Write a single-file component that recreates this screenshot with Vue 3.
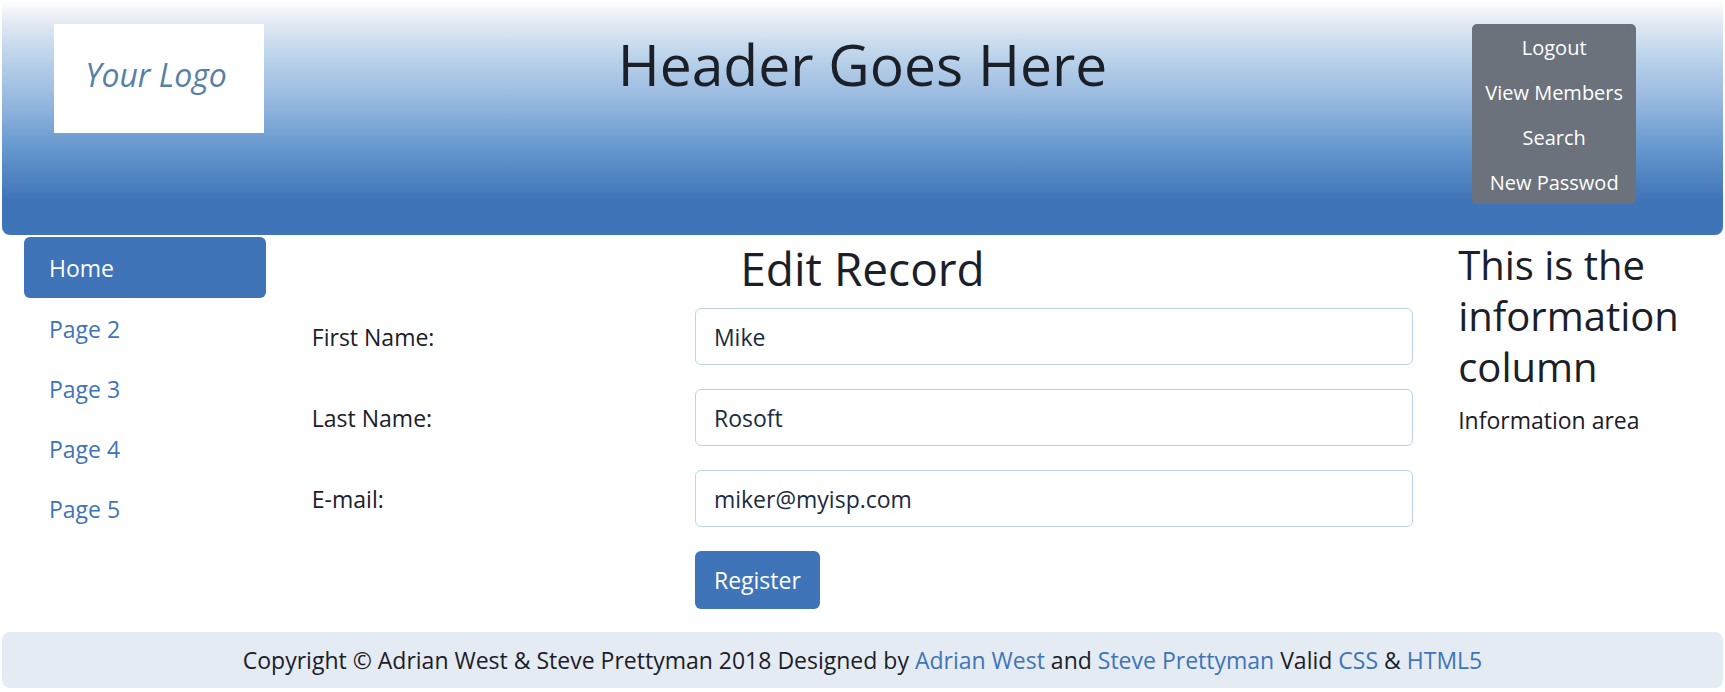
<script setup>
import { ref } from 'vue'

const actions = ['Logout', 'View Members', 'Search', 'New Passwod']
const pages = ['Home', 'Page 2', 'Page 3', 'Page 4', 'Page 5']
const fields = ref([
  { id: 'first_name', label: 'First Name:', type: 'text', value: 'Mike' },
  { id: 'last_name', label: 'Last Name:', type: 'text', value: 'Rosoft' },
  { id: 'email', label: 'E-mail:', type: 'email', value: 'miker@myisp.com' }
])
</script>

<template>
  <div class="page">
    <header class="banner">
      <div class="logo-cell"><div class="logo">Your Logo</div></div>
      <h1>Header Goes Here</h1>
      <nav class="actions" aria-label="Account">
        <button v-for="action in actions" :key="action" type="button">{{ action }}</button>
      </nav>
    </header>

    <div class="columns">
      <nav class="pages" aria-label="Pages">
        <a v-for="(page, i) in pages" :key="page" href="#" :class="{ active: i === 0 }">{{ page }}</a>
      </nav>

      <main>
        <h2>Edit Record</h2>
        <form @submit.prevent>
          <div v-for="field in fields" :key="field.id" class="row">
            <label :for="field.id">{{ field.label }}</label>
            <input :id="field.id" v-model="field.value" :type="field.type" />
          </div>
          <div class="row submit">
            <button type="submit">Register</button>
          </div>
        </form>
      </main>

      <aside>
        <h3>This is the information column</h3>
        <p>Information area</p>
      </aside>
    </div>

    <footer>
      Copyright © Adrian West &amp; Steve Prettyman 2018 Designed by
      <a href="#">Adrian West</a> and <a href="#">Steve Prettyman</a> Valid
      <a href="#">CSS</a> &amp; <a href="#">HTML5</a>
    </footer>
  </div>
</template>

<style>
body {
  background: #fff;
}
</style>

<style scoped>
* {
  box-sizing: border-box;
}
.page {
  padding: 0 2px;
  font-family: "Segoe UI", "Open Sans", "Noto Sans", sans-serif;
  font-size: 23px;
  line-height: 36px;
  color: #1b2028;
}
h1, h2, h3, p {
  margin: 0;
  font-weight: 400;
}
a {
  color: #4074b8;
  text-decoration: none;
}
button, input {
  font: inherit;
}
.banner {
  display: grid;
  grid-template-columns: 2fr 8fr 2fr;
  align-items: start;
  padding: 24px 0 31px;
  border-radius: 0 0 8px 8px;
  background: linear-gradient(#fff 0, #e5ebf3 20px, #c0d6ec 52px, #95b7df 102px, #6698ce 148px, #4074b8 200px);
}
.logo-cell {
  padding: 0 22px 0 52px;
}
.logo {
  max-width: 210px;
  height: 109px;
  padding-right: 6px;
  background: #fff;
  color: #587fa8;
  font-size: 32px;
  font-style: italic;
  line-height: 102px;
  text-align: center;
}
h1 {
  font-size: 57px;
  line-height: 80px;
  text-align: center;
}
.actions {
  display: flex;
  flex-direction: column;
  justify-self: start;
  width: 164px;
  margin-left: 36px;
  border-radius: 5px;
  background: #6b727c;
}
.actions button {
  height: 45px;
  padding: 2px 0 0;
  border: 0;
  background: none;
  color: #fff;
  font-size: 20px;
  line-height: 40px;
  white-space: nowrap;
}
.columns {
  display: grid;
  grid-template-columns: 2fr 8fr 2fr;
  padding-top: 2px;
}
.pages {
  display: flex;
  flex-direction: column;
  padding: 0 23px 0 22px;
}
.pages a {
  padding: 13px 25px 11px;
}
.pages a.active {
  border-radius: 6px;
  background: #4074b8;
  color: #fff;
  line-height: 37px;
}
main {
  padding: 0 23px;
}
h2 {
  font-size: 46px;
  line-height: 63px;
  padding-bottom: 8px;
  text-align: center;
}
.row {
  display: grid;
  grid-template-columns: 1fr 2fr;
  column-gap: 24px;
  align-items: center;
  margin-bottom: 24px;
}
.row input {
  width: 100%;
  height: 57px;
  padding: 0 18px;
  border: 1px solid #bdd3ea;
  border-radius: 6px;
  background: #fff;
  color: #1b2b40;
  outline: 0;
}
.submit {
  margin-bottom: 23px;
}
.submit button {
  grid-column: 2;
  justify-self: start;
  height: 58px;
  padding: 0 19px;
  border: 0;
  border-radius: 6px;
  background: #4074b8;
  color: #fff;
}
aside {
  padding: 2px 22px 0;
}
h3 {
  font-size: 40px;
  line-height: 51px;
  padding-bottom: 10px;
}
footer {
  padding: 10px 24px;
  border-radius: 8px;
  background: #e5ebf3;
  text-align: center;
}
</style>
